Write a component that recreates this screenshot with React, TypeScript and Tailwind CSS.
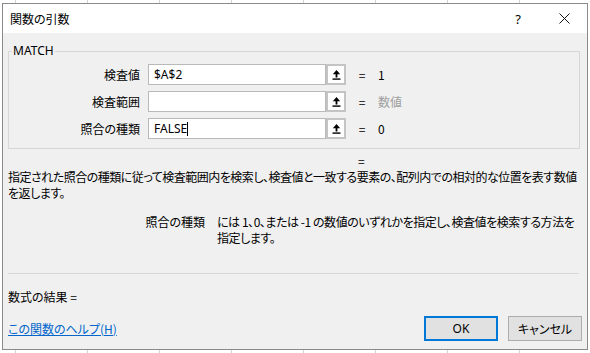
import React from "react";

const UpIcon = () => (
  <svg width="9" height="11" viewBox="0 0 9 11">
    <path d="M4.5 1 L8.2 5.2 L5.4 5.2 L5.4 8.5 L3.6 8.5 L3.6 5.2 L0.8 5.2 Z" fill="#000" />
    <rect x="0.5" y="9.4" width="8" height="1.4" fill="#000" />
  </svg>
);

type RowProps = {
  label: string;
  value?: string;
  result: string;
  muted?: boolean;
  caret?: boolean;
};

const ArgRow = ({ label, value, result, muted, caret }: RowProps) => (
  <div className="flex items-center h-[21px]">
    <div className="w-[131px] shrink-0 text-right">{label}</div>
    <div className="ml-[8px] flex h-full">
      <div className="w-[178px] h-full bg-white border border-[#b9b9b9] flex items-center pl-[5px] font-['Noto_Sans',sans-serif] text-[12px]">
        {value}
        {caret && <span className="w-px h-[14px] bg-black" />}
      </div>
      <div className="w-[20px] h-full border-2 border-[#c4c4c4] bg-white flex items-center justify-center">
        <UpIcon />
      </div>
    </div>
    <div className="ml-[12px] w-[8px] text-center">=</div>
    <div className={"ml-[12px] " + (muted ? "text-[#a0a0a0]" : "text-black")}>{result}</div>
  </div>
);

const App = () => {
  return (
    <div className="w-[590px] h-[353px] overflow-hidden bg-white bg-[repeating-linear-gradient(90deg,transparent_0_15px,#d4d4d4_15px_16px,transparent_16px_72px)] pt-[3px] pl-[2px] font-['Noto_Sans_CJK_JP','Noto_Sans',sans-serif] [font-feature-settings:'palt'] text-[12px] leading-[16px] text-black">
      <div className="w-[586px] h-[347px] border border-[#8a8a8a] bg-[#f0f0f0] flex flex-col">
        {/* title bar */}
        <div className="h-[29px] bg-white flex items-center">
          <div className="pl-[7px] flex-1 text-[12px]">関数の引数</div>
          <div className="w-[46px] h-full flex items-center justify-center text-[13px] font-['Noto_Sans',sans-serif]">?</div>
          <div className="w-[46px] h-full flex items-center justify-center">
            <svg width="11" height="11" viewBox="0 0 11 11">
              <path d="M0.5 0.5 L10.5 10.5 M10.5 0.5 L0.5 10.5" stroke="#111" strokeWidth="1" />
            </svg>
          </div>
        </div>

        <div className="flex flex-col px-[5px]">
          {/* group box */}
          <fieldset className="mt-[10px] border border-[#d7d7d7] pb-[9px] w-[572px]">
            <legend className="ml-[3px] px-[1px] font-['Noto_Sans',sans-serif] text-[12px]">MATCH</legend>
            <div className="flex flex-col gap-[6px] pt-[5px]">
              <ArgRow label="検査値" value="$A$2" result="1" />
              <ArgRow label="検査範囲" result="数値" muted />
              <ArgRow label="照合の種類" value="FALSE" result="0" caret />
            </div>
          </fieldset>

          <div className="mt-[4px] h-[16px] pl-[350px]">=</div>

          <div className="whitespace-nowrap tracking-[-0.5px]">
            指定された照合の種類に従って検査範囲内を検索し、検査値と一致する要素の、配列内での相対的な位置を表す数値
            <br />
            を返します。
          </div>

          <div className="mt-[13px] flex">
            <div className="w-[197px] shrink-0 text-right">照合の種類</div>
            <div className="ml-[12px] whitespace-nowrap tracking-[-0.45px]">
              には 1、0、または -1 の数値のいずれかを指定し、検査値を検索する方法を
              <br />
              指定します。
            </div>
          </div>

          <div className="mt-[27px] w-[571px] border-t border-[#d8d8d8]" />

          <div className="mt-[15px] h-[16px]">数式の結果 =</div>

          <div className="mt-[11px] flex items-center">
            <a className="flex-1 text-[#0066cc] underline" href="#">
              この関数のヘルプ(H)
            </a>
            <button className="w-[74px] h-[25px] border-2 border-[#0078d7] bg-[#e1e1e1] text-[12px] font-['Noto_Sans',sans-serif]">
              OK
            </button>
            <button className="ml-[10px] w-[74px] h-[25px] border border-[#adadad] bg-[#e1e1e1] text-[12px]">
              キャンセル
            </button>
          </div>
        </div>
      </div>
    </div>
  );
};

export default App;
